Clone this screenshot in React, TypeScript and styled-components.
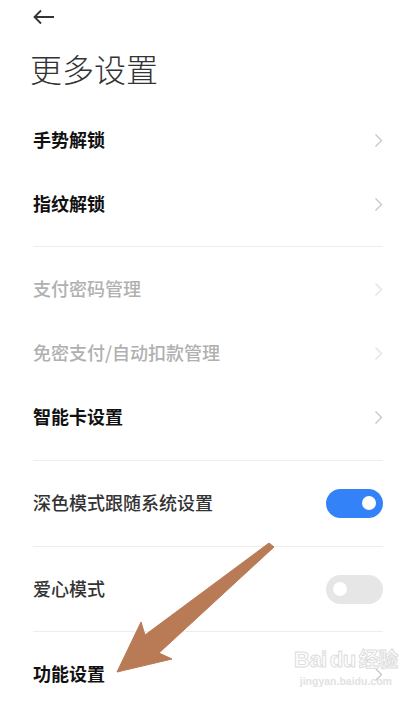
import React from "react";
import styled, { createGlobalStyle } from "styled-components";

const GlobalStyle = createGlobalStyle`
    html, body {
        margin: 0;
        padding: 0;
        background: #ffffff;
        overflow: hidden;
    }
    body {
        font-family: "Noto Sans CJK SC", "Noto Sans", sans-serif;
    }
`;

const Page = styled.div`
    position: relative;
    width: 413px;
    height: 703px;
    background: #ffffff;
    overflow: hidden;
    padding: 0 30px 0 33px;
    box-sizing: border-box;
`;

const TopBar = styled.div`
    height: 35px;
    display: flex;
    align-items: center;
    padding-bottom: 1px;
    box-sizing: border-box;
`;

const Title = styled.h1`
    margin: 0 0 0 -3px;
    height: 73px;
    padding-bottom: 7px;
    box-sizing: border-box;
    display: flex;
    align-items: center;
    font-size: 32px;
    font-weight: 300;
    color: #333333;
`;

const List = styled.div`
    display: flex;
    flex-direction: column;
`;

const Row = styled.div`
    height: 64px;
    display: flex;
    align-items: center;
    justify-content: space-between;
`;

const Label = styled.span<{ $tone: "strong" | "normal" | "muted" }>`
    font-size: 18px;
    font-weight: ${(p) => (p.$tone === "strong" ? 700 : 500)};
    color: ${(p) =>
        p.$tone === "strong" ? "#111111" : p.$tone === "muted" ? "#b0b0b0" : "#333333"};
    margin-bottom: 2px;
`;

const Divider = styled.div<{ $h: number }>`
    height: ${(p) => p.$h}px;
    display: flex;
    align-items: center;

    &::after {
        content: "";
        display: block;
        width: 100%;
        height: 1px;
        background: #ededed;
    }
`;

const Switch = styled.div<{ $on: boolean }>`
    width: 57px;
    height: 29px;
    border-radius: 15px;
    background: ${(p) => (p.$on ? "#3482f7" : "#e6e6e6")};
    display: flex;
    align-items: center;
    justify-content: ${(p) => (p.$on ? "flex-end" : "flex-start")};
    padding: 0 7px;
    box-sizing: border-box;

    &::after {
        content: "";
        width: 14px;
        height: 14px;
        border-radius: 50%;
        background: #ffffff;
    }
`;

const Watermark = styled.div`
    position: absolute;
    left: 294px;
    top: 646px;
    display: flex;
    flex-direction: column;
    align-items: center;
    font-family: "Liberation Sans", sans-serif;
    pointer-events: none;
`;

const MarkTop = styled.div`
    font-size: 22px;
    font-weight: 700;
    letter-spacing: -0.5px;
    line-height: 26px;
    color: transparent;
    -webkit-text-stroke: 1px #dddddd;
    display: flex;
    align-items: baseline;
    gap: 3px;
`;

const MarkCjk = styled.span`
    font-family: "Noto Sans CJK SC", sans-serif;
    font-size: 20px;
`;

const MarkSub = styled.div`
    font-size: 10.5px;
    font-weight: 700;
    color: #e2e2e2;
    margin-top: 2px;
`;

const Overlay = styled.svg`
    position: absolute;
    left: 0;
    top: 0;
    pointer-events: none;
`;

const Chevron = ({ muted }: { muted?: boolean }) => (
    <svg width="9" height="15" viewBox="0 0 9 15">
        <polyline
            points="1.5,1.5 7.5,7.5 1.5,13.5"
            fill="none"
            stroke={muted ? "#e2e2e2" : "#c6c6c6"}
            strokeWidth="1.3"
        />
    </svg>
);

const BackArrow = () => (
    <svg width="22" height="16" viewBox="0 0 22 16">
        <path
            d="M21 8 H2 M8 1.5 L1.5 8 L8 14.5"
            fill="none"
            stroke="#333333"
            strokeWidth="1.8"
        />
    </svg>
);

type Item =
    | { kind: "link"; label: string; tone: "strong" | "normal" | "muted" }
    | { kind: "switch"; label: string; on: boolean }
    | { kind: "divider"; h: number };

const items: Item[] = [
    { kind: "link", label: "手势解锁", tone: "strong" },
    { kind: "link", label: "指纹解锁", tone: "strong" },
    { kind: "divider", h: 21 },
    { kind: "link", label: "支付密码管理", tone: "muted" },
    { kind: "link", label: "免密支付/自动扣款管理", tone: "muted" },
    { kind: "link", label: "智能卡设置", tone: "strong" },
    { kind: "divider", h: 22 },
    { kind: "switch", label: "深色模式跟随系统设置", on: true },
    { kind: "divider", h: 22 },
    { kind: "switch", label: "爱心模式", on: false },
    { kind: "divider", h: 21 },
    { kind: "link", label: "功能设置", tone: "strong" },
];

const App: React.FC = () => {
    return (
        <>
            <GlobalStyle />
            <Page>
                <TopBar>
                    <BackArrow />
                </TopBar>
                <Title>更多设置</Title>
                <List>
                    {items.map((it, i) => {
                        if (it.kind === "divider") return <Divider key={i} $h={it.h} />;
                        if (it.kind === "switch")
                            return (
                                <Row key={i}>
                                    <Label $tone="normal">{it.label}</Label>
                                    <Switch $on={it.on} />
                                </Row>
                            );
                        return (
                            <Row key={i}>
                                <Label $tone={it.tone}>{it.label}</Label>
                                <Chevron muted={it.tone === "muted"} />
                            </Row>
                        );
                    })}
                </List>
                <Watermark>
                    <MarkTop>
                        <span>Bai</span>
                        <span>du</span>
                        <MarkCjk>经验</MarkCjk>
                    </MarkTop>
                    <MarkSub>jingyan.baidu.com</MarkSub>
                </Watermark>
                <Overlay width="413" height="703" viewBox="0 0 413 703">
                    <polygon
                        points="269,543 274,547 159,653 172,659 117,672 141,622 145,635"
                        fill="#b97a56"
                        stroke="#b97a56"
                        strokeWidth="1"
                        strokeLinejoin="round"
                    />
                </Overlay>
            </Page>
        </>
    );
};

export default App;
